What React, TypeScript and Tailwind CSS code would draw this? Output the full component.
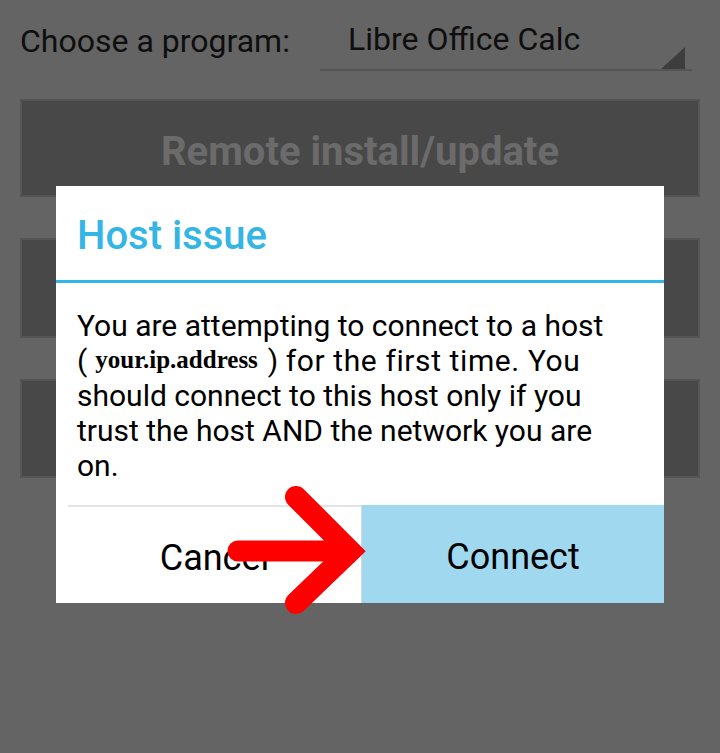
import React from "react";

/**
 * Android-style "Host issue" dialog over a dimmed remote-control screen,
 * with a red arrow pointing at the Connect button.
 */
export default function App() {
  return (
    <div
      className="relative h-[753px] w-[720px] overflow-hidden bg-[#646464]"
      style={{ fontFamily: "Roboto, 'Noto Sans', sans-serif" }}
    >
      {/* Program chooser row */}
      <div className="flex items-start px-5 pt-[20px]">
        <span className="w-[300px] text-[32px] leading-[42px] text-[#0e0e0e]">
          Choose a program:
        </span>
        <div className="relative h-[51px] w-[372px] border-b-2 border-[#545454]">
          <span className="block pl-[28px] text-[32px] leading-[38px] text-[#0e0e0e]">
            Libre Office Calc
          </span>
          <svg
            className="absolute bottom-0 right-[7px]"
            width="24"
            height="22"
            viewBox="0 0 24 22"
          >
            <polygon points="24,0 24,22 0,22" fill="#3d3d3d" />
          </svg>
        </div>
      </div>

      {/* Disabled action buttons behind the dialog */}
      <div className="mx-5 mt-[28px] flex flex-col gap-[41px]">
        <div className="flex h-[98px] items-center justify-center border-2 border-[#555555] bg-[#484848] pt-[8px]">
          <span className="text-[40px] font-bold text-[#6b6b6b]">
            Remote install/update
          </span>
        </div>
        <div className="h-[100px] border-2 border-[#555555] bg-[#484848]" />
        <div className="h-[99px] border-2 border-[#555555] bg-[#484848]" />
      </div>

      {/* Dialog */}
      <div className="absolute left-[56px] top-[186px] flex h-[417px] w-[608px] flex-col bg-white">
        <div className="flex h-[94px] items-center px-[21px] pt-[5px]">
          <span className="text-[40px] font-medium text-[#33b5e5]">
            Host issue
          </span>
        </div>
        <div className="h-[3px] bg-[#33b5e5]" />
        <p className="pl-[21px] pr-[42px] pt-[25px] text-[30px] leading-[35px] text-black">
          You are attempting to connect to a host{" "}
          <span className="whitespace-nowrap">
            (
            <span
              className="relative -top-[3px] ml-[8px] mr-[10px] inline-block text-[25px] font-bold leading-[30px]"
              style={{ fontFamily: "'Liberation Serif', serif" }}
            >
              your.ip.address
            </span>
            )
          </span>{" "}
          <span className="tracking-[0.6px]">for the first time. You</span>{" "}
          should connect to this host only if you trust the host AND the
          network you are on.
        </p>
        <div className="mt-auto flex h-[98px]">
          <div className="flex w-[305px] items-center justify-center">
            <div className="ml-[12px] flex h-full w-full items-center justify-center border-t-2 border-[#e3e3e3] pt-[6px]">
              <span className="text-[36px] text-black">Cancel</span>
            </div>
          </div>
          <div className="flex flex-1 items-center justify-center border-l border-[#d8d8d8] bg-[#a0d9ef] pt-[6px]">
            <span className="text-[36px] text-black">Connect</span>
          </div>
        </div>
      </div>

      {/* Red arrow annotation */}
      <svg
        className="absolute left-0 top-0"
        width="720"
        height="753"
        viewBox="0 0 720 753"
      >
        <line
          x1="238"
          y1="551"
          x2="345"
          y2="551"
          stroke="#ff0000"
          strokeWidth="21"
          strokeLinecap="round"
        />
        <polyline
          points="296,497 350,551 296,603"
          fill="none"
          stroke="#ff0000"
          strokeWidth="22"
          strokeLinejoin="miter"
          strokeLinecap="round"
        />
      </svg>
    </div>
  );
}
